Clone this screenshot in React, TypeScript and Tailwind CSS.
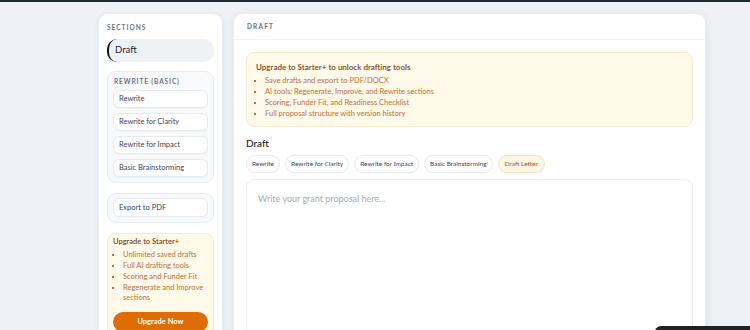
import type { FC } from 'react';

const rewriteTools = ['Rewrite', 'Rewrite for Clarity', 'Rewrite for Impact', 'Basic Brainstorming'];

const sidebarPerks = [
  'Unlimited saved drafts',
  'Full AI drafting tools',
  'Scoring and Funder Fit',
  'Regenerate and Improve sections',
];

const bannerPerks = [
  'Save drafts and export to PDF/DOCX',
  'AI tools: Regenerate, Improve, and Rewrite sections',
  'Scoring, Funder Fit, and Readiness Checklist',
  'Full proposal structure with version history',
];

const chips = ['Rewrite', 'Rewrite for Clarity', 'Rewrite for Impact', 'Basic Brainstorming'];

const SidebarButton: FC<{ label: string }> = ({ label }) => (
  <button
    type="button"
    className="flex h-[18px] w-full items-center rounded-[6px] border border-[#e6e9ef] bg-white px-[5px] text-left text-[7.5px] text-[#3f4654] shadow-[0_1px_1px_rgba(30,41,59,0.03)]"
  >
    {label}
  </button>
);

const Sidebar: FC = () => (
  <aside className="w-[125px] shrink-0 rounded-t-[10px] border border-[#e9ecf1] bg-white px-[8px] pt-[9px] shadow-[0_1px_4px_rgba(30,41,59,0.08)]">
    <p className="text-[6.5px] leading-[10px] font-bold tracking-[0.16em] text-[#6b7382]">SECTIONS</p>

    <div className="mt-[6px] flex h-[23px] items-center rounded-[10px] border-l-2 border-[#111] bg-[#eef1f6] pl-[6px] text-[9.5px] text-[#1f2430]">
      Draft
    </div>

    <div className="mt-[9px] rounded-[9px] border border-[#e8ecf2] bg-[#f7f9fb] px-[5px] pt-[5px] pb-[5px]">
      <p className="pl-[1px] text-[6.5px] leading-[10px] font-bold tracking-[0.14em] text-[#6b7382]">REWRITE (BASIC)</p>
      <div className="mt-[3px] flex flex-col gap-[5px]">
        {rewriteTools.map(tool => (
          <SidebarButton key={tool} label={tool} />
        ))}
      </div>
    </div>

    <div className="mt-[10px] rounded-[9px] border border-[#e8ecf2] bg-[#f7f9fb] px-[5px] pt-[4px] pb-[5px]">
      <button
        type="button"
        className="flex h-[19px] w-full items-center rounded-[6px] border border-[#e6e9ef] bg-white px-[5px] text-left text-[7.5px] text-[#34406a]"
      >
        Export to PDF
      </button>
    </div>

    <div className="mt-[10px] rounded-[9px] border border-[#f6ebcd] bg-[#fef9e8] px-[5px] pt-[3px] pb-[10px]">
      <p className="text-[7.5px] leading-[10px] font-semibold text-[#7a4419]">Upgrade to Starter+</p>
      <ul className="mt-[3px] flex list-disc flex-col gap-[1px] pl-[10px] text-[7.5px] leading-[10px] text-[#c0703a] marker:text-[#c62828]">
        {sidebarPerks.map(perk => (
          <li key={perk}>{perk}</li>
        ))}
      </ul>
      <button
        type="button"
        className="mt-[9px] h-[20px] w-full rounded-full bg-[#df6c05] text-[7.5px] font-bold text-white"
      >
        Upgrade Now
      </button>
    </div>
  </aside>
);

const DraftPanel: FC = () => (
  <main className="w-[473px] shrink-0 rounded-t-[10px] border border-[#e9ecf1] bg-white shadow-[0_2px_10px_rgba(30,41,59,0.08)]">
    <div className="flex h-[26px] items-center border-b border-[#f2f4f7] px-[13px]">
      <p className="text-[6.5px] font-bold tracking-[0.18em] text-[#6b7382]">DRAFT</p>
    </div>

    <div className="px-[12px] pt-[12px]">
      <div className="rounded-[8px] border border-[#f6ebcd] bg-[#fef9e8] pt-[9px] pr-[10px] pb-[7px] pl-[9px]">
        <p className="text-[8px] leading-[10px] font-semibold text-[#7a4419]">
          Upgrade to Starter+ to unlock drafting tools
        </p>
        <ul className="mt-[4px] flex list-disc flex-col gap-[1px] pl-[9px] text-[7.5px] leading-[10px] text-[#c0703a] marker:text-[#c62828]">
          {bannerPerks.map(perk => (
            <li key={perk}>{perk}</li>
          ))}
        </ul>
      </div>

      <h2 className="mt-[10px] text-[10px] leading-[12px] font-medium text-[#1f2430]">Draft</h2>

      <div className="mt-[6px] flex gap-[5px]">
        {chips.map(chip => (
          <button
            key={chip}
            type="button"
            className="flex h-[18px] items-center rounded-full border border-[#e6e9ef] bg-white px-[5px] text-[6.5px] text-[#3f4654]"
          >
            {chip}
          </button>
        ))}
        <button
          type="button"
          className="flex h-[18px] items-center rounded-full border border-[#f4e6c2] bg-[#fdf6e2] px-[6px] text-[6.5px] text-[#a8562a]"
        >
          Draft Letter
        </button>
      </div>

      <div className="mt-[6px] h-[200px] rounded-[8px] border border-[#eceff3] bg-white px-[11px] pt-[12px]">
        <p className="text-[9px] text-[#a6adbf]">Write your grant proposal here...</p>
      </div>
    </div>
  </main>
);

const App: FC = () => (
  <div className="relative h-[330px] w-[750px] overflow-hidden border-t-2 border-[#1f2d33] bg-[#eef1f5] font-[Lato,sans-serif]">
    <div className="flex gap-[10px] pt-[11px] pl-[98px]">
      <Sidebar />
      <DraftPanel />
    </div>
    <div className="absolute top-[324px] left-[655px] h-[40px] w-[120px] rounded-[6px] bg-[#222]" />
  </div>
);

export default App;
